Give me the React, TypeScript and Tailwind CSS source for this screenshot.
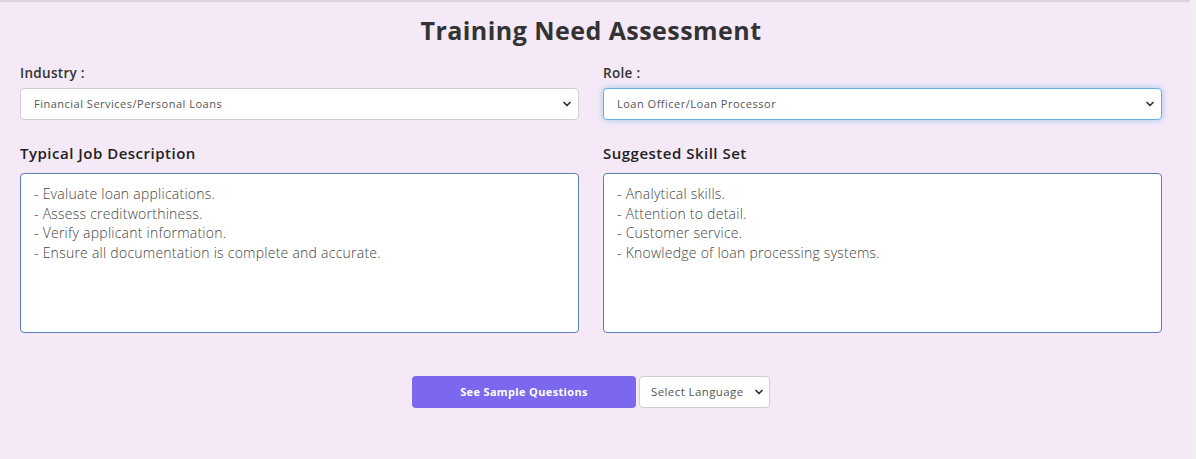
import { ChevronDown } from "lucide-react";

const jobLines = [
    "- Evaluate loan applications.",
    "- Assess creditworthiness.",
    "- Verify applicant information.",
    "- Ensure all documentation is complete and accurate.",
];

const skillLines = [
    "- Analytical skills.",
    "- Attention to detail.",
    "- Customer service.",
    "- Knowledge of loan processing systems.",
];

const font = { fontFamily: '"Open Sans", "Noto Sans", sans-serif' };

const SelectBox = ({ value, focused }: { value: string; focused?: boolean }) => (
    <div
        className={`h-8 flex items-center justify-between pl-[13px] pr-[5px] bg-white rounded-[4px] border ${
            focused
                ? "border-[#66afe9] shadow-[0_0_6px_rgba(102,175,233,0.6)]"
                : "border-[#cfcfcf]"
        }`}
    >
        <span className="text-[11px] text-[#555] tracking-[0.5px]">{value}</span>
        <ChevronDown size={12} strokeWidth={3.5} className="text-[#333]" />
    </div>
);

const TextBox = ({ lines }: { lines: string[] }) => (
    <div className="h-[160px] bg-white rounded-[4px] border border-[#5a7fb8] px-[13px] pt-[10px]">
        {lines.map((line, i) => (
            <div
                key={i}
                className="text-[14px] leading-[19.6px] text-[#444] font-light tracking-[0.25px]"
            >
                {line}
            </div>
        ))}
    </div>
);

export default function App() {
    return (
        <div className="w-[1196px] h-[459px] flex bg-[#f0f0f0]" style={font}>
            <div className="w-[1190px] h-full bg-[#f5e9f7] border-t-2 border-[#ddd3de] pl-5 pr-7">
                <h1 className="text-center text-[25px] font-bold text-[#333] leading-none pt-[16px] tracking-[0.45px]">
                    Training Need Assessment
                </h1>
                <div className="grid grid-cols-2 gap-x-6 mt-[20px]">
                    <div>
                        <div className="text-[13.5px] font-semibold text-[#333] leading-5 mb-[5px] tracking-[0.3px]">
                            Industry :
                        </div>
                        <SelectBox value="Financial Services/Personal Loans" />
                    </div>
                    <div>
                        <div className="text-[13.5px] font-semibold text-[#333] leading-5 mb-[5px] tracking-[0.3px]">
                            Role :
                        </div>
                        <SelectBox value="Loan Officer/Loan Processor" focused />
                    </div>
                    <div className="mt-[23px]">
                        <div className="text-[15px] font-semibold text-[#222] leading-5 mb-[10px] tracking-[0.5px]">
                            Typical Job Description
                        </div>
                        <TextBox lines={jobLines} />
                    </div>
                    <div className="mt-[23px]">
                        <div className="text-[15px] font-semibold text-[#222] leading-5 mb-[10px] tracking-[0.5px]">
                            Suggested Skill Set
                        </div>
                        <TextBox lines={skillLines} />
                    </div>
                </div>
                <div className="flex justify-center gap-[3px] mt-[43px]">
                    <button className="w-[224px] h-8 rounded-[4px] bg-[#7b68ee] text-white text-[11px] font-bold tracking-[0.35px]">
                        See Sample Questions
                    </button>
                    <div className="w-[131px] h-8 bg-white rounded-[4px] border border-[#cfcfcf] flex items-center justify-between pl-[11px] pr-[4px]">
                        <span className="text-[11.5px] text-[#555] tracking-[0.4px]">Select Language</span>
                        <ChevronDown size={12} strokeWidth={3.5} className="text-[#333]" />
                    </div>
                </div>
            </div>
        </div>
    );
}
